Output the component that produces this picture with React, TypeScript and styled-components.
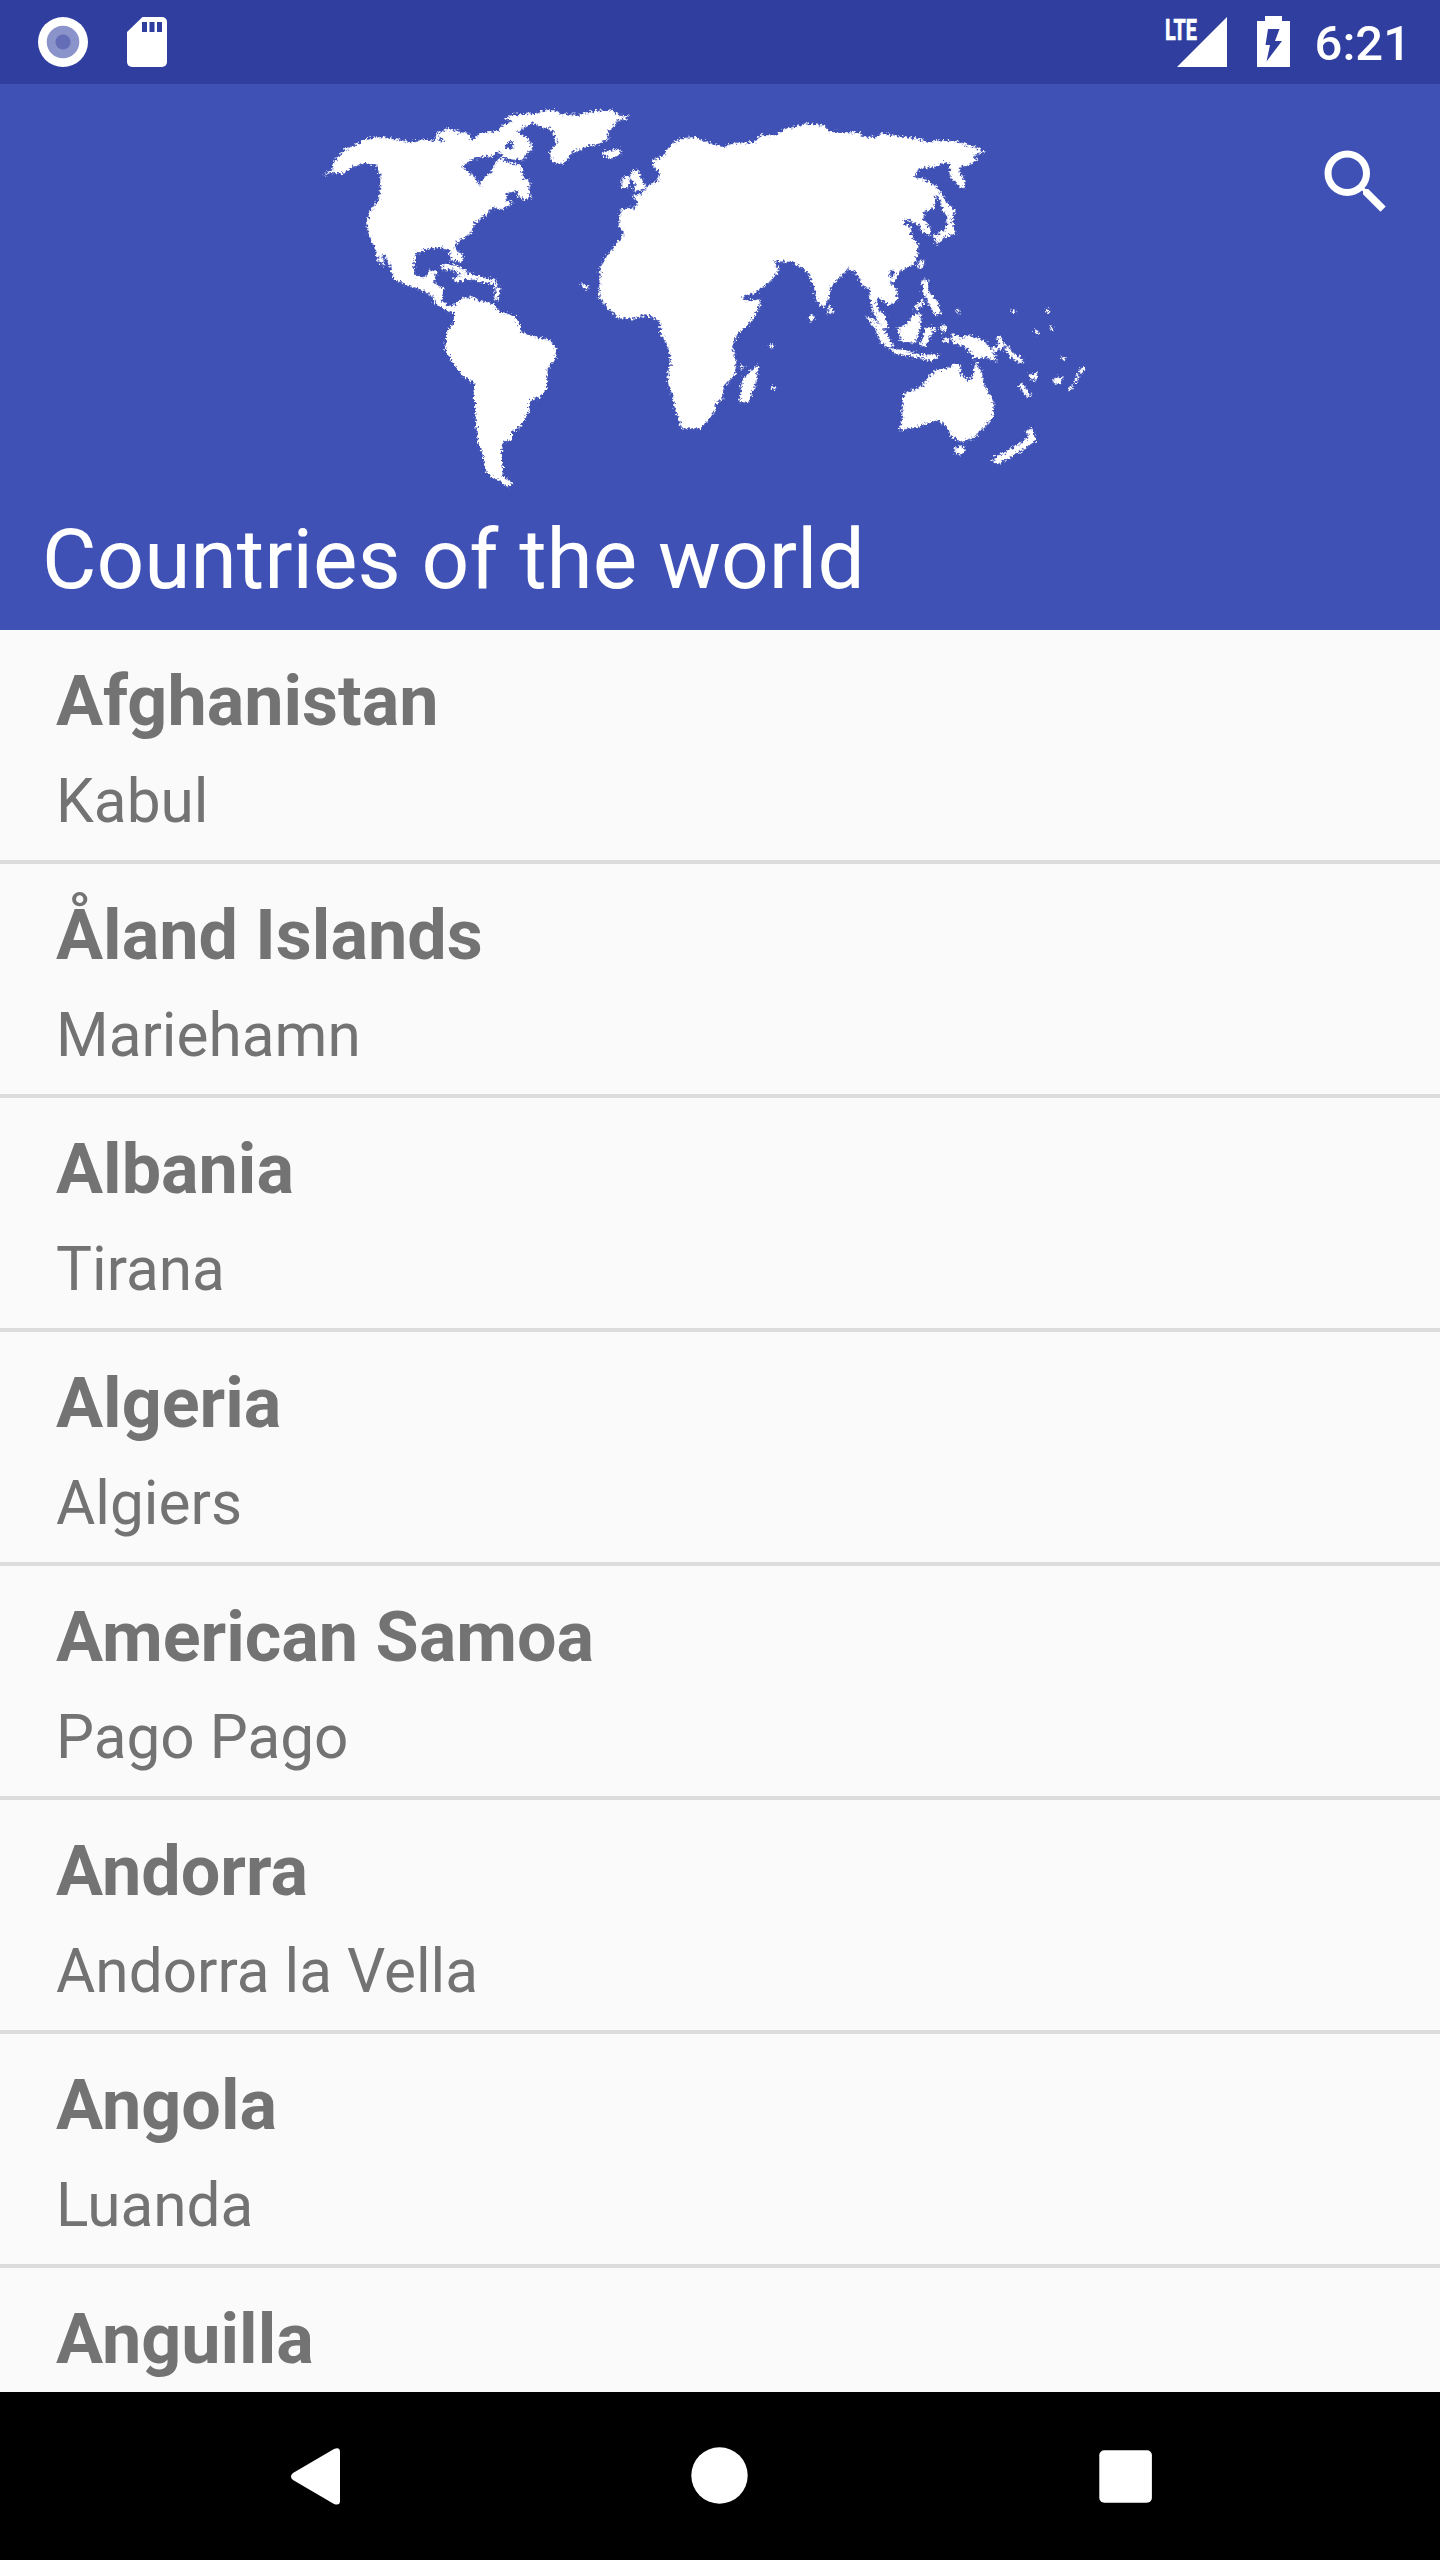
import React from "react";
import styled, { createGlobalStyle } from "styled-components";

const BLUE = "#3f51b5";
const DARK = "#303f9f";

const GlobalStyle = createGlobalStyle`
  body { margin: 0; background: #fafafa; }
  * { box-sizing: border-box; }
`;

const Screen = styled.div`
  display: flex;
  flex-direction: column;
  width: 1440px;
  height: 2560px;
  overflow: hidden;
  background: #fafafa;
  font-family: Roboto, "Noto Sans", sans-serif;
`;

const StatusBar = styled.header`
  display: flex;
  flex: none;
  align-items: center;
  justify-content: space-between;
  height: 84px;
  padding: 0 29px 0 38px;
  background: ${DARK};
  color: #fff;
`;

const StatusGroup = styled.div<{ $gap: number }>`
  display: flex;
  align-items: center;
  gap: ${(p) => p.$gap}px;
`;

const Icon = styled.svg`
  display: block;
  flex: none;
  overflow: visible;
`;

const Clock = styled.time`
  padding-top: 3px;
  margin-left: -5px;
  font-size: 49px;
  font-weight: 500;
  line-height: 57px;
`;

const AppBar = styled.section`
  display: flex;
  flex: none;
  flex-direction: column;
  height: 546px;
  background: ${BLUE};
  color: #fff;
`;

const Banner = styled.div`
  display: flex;
  align-items: flex-start;
  justify-content: space-between;
  height: 420px;
  padding: 6px 42px 0 300px;
`;

const SearchButton = styled.button`
  margin: 50px 0 0;
  padding: 0;
  border: 0;
  background: none;
  color: inherit;
`;

const Title = styled.h1`
  margin: 5px 0 0 42px;
  font-size: 83.8px;
  font-weight: 400;
  line-height: 100px;
`;

const List = styled.ul`
  flex: 1;
  min-height: 0;
  margin: 0;
  padding: 0;
  overflow: hidden;
  list-style: none;
`;

const Row = styled.li`
  height: 234px;
  padding: 30px 56px 0;
  border-bottom: 4px solid #dcdcdc;
  color: #737373;
`;

const Country = styled.div`
  font-size: 70.1px;
  font-weight: 700;
  line-height: 82px;
`;

const Capital = styled.div`
  margin-top: 25px;
  font-size: 60.3px;
  line-height: 70px;
`;

const NavBar = styled.nav`
  display: flex;
  flex: none;
  align-items: center;
  justify-content: space-between;
  height: 168px;
  padding: 0 274px;
  background: #000;
`;

const countries = [
  ["Afghanistan", "Kabul"],
  ["Åland Islands", "Mariehamn"],
  ["Albania", "Tirana"],
  ["Algeria", "Algiers"],
  ["American Samoa", "Pago Pago"],
  ["Andorra", "Andorra la Vella"],
  ["Angola", "Luanda"],
  ["Anguilla", ""],
];

const line = { fill: "none", stroke: "#fff", strokeLinecap: "round", strokeLinejoin: "round" } as const;

const WorldMap = () => (
  <Icon width="800" height="410" viewBox="300 90 800 410" fill="#fff" aria-label="World map">
    <defs>
      <filter id="coast" filterUnits="userSpaceOnUse" x="300" y="90" width="800" height="410" colorInterpolationFilters="sRGB">
        <feTurbulence type="fractalNoise" baseFrequency="0.42" numOctaves="2" seed="4" result="noise" />
        <feDisplacementMap in="SourceGraphic" in2="noise" scale="8" xChannelSelector="R" yChannelSelector="G" />
        <feGaussianBlur stdDeviation="0.6" />
      </filter>
    </defs>
    <g filter="url(#coast)" transform="translate(.3 .2)">
      <g transform="translate(300 90) scale(.33333)">
        <path d="M66 256 95 240 100 215 130 180 165 165 190 148 240 140 290 148 330 156 370 148 405 152 410 130 445 115 480 126 505 128 512 152 540 128 595 122 600 108 640 92 612 88 625 76 700 70 745 60 765 60 780 72 835 74 885 62 935 60 955 74 984 76 975 86 950 92 938 112 920 125 925 145 900 160 865 165 840 180 815 185 795 215 775 222 755 212 748 185 768 160 765 140 755 118 715 108 700 95 665 115 650 128 680 140 698 175 680 190 668 210 640 208 665 230 668 260 690 275 685 295 692 325 665 325 650 318 655 302 620 308 615 328 640 338 605 358 580 352 555 375 520 400 510 430 470 455 463 475 488 498 485 515 455 510 445 480 425 470 385 475 345 490 340 530 345 555 370 565 385 542 410 540 400 580 430 595 425 630 440 645 475 650 455 668 430 655 405 640 400 620 360 598 310 582 280 565 270 530 255 495 245 490 252 528 235 515 222 470 205 430 200 395 210 360 235 330 240 290 240 260 230 228 195 218 150 232 130 250 95 248Z" />
        <path fill={BLUE} d="M485 230 520 205 545 200 580 198 592 184 606 190 604 202 585 215 572 248 550 264 538 288 525 262ZM614 162 630 153 645 165 630 177 616 173ZM612 200 635 208 653 214 648 223 630 218 606 206ZM415 142 430 145 428 154 415 152Z" />
        <path {...line} strokeWidth="16" d="M430 532 458 530 492 548M468 566 510 558 548 568" />
        <path {...line} strokeWidth="12" d="M548 568 580 575 594 600 586 625" />
      </g>
      <path transform="translate(420 270) scale(.33333)" d="M50 95 80 113 100 105 125 85 155 78 175 92 215 98 240 125 280 135 295 155 302 185 345 200 385 208 408 235 405 265 382 295 380 350 365 378 330 390 322 430 300 470 275 485 275 510 250 515 242 540 248 600 245 618 278 640 260 650 240 632 215 620 195 600 185 545 172 515 165 430 162 340 125 315 100 280 75 240 78 185 100 155 102 120 80 120 55 108Z" />
      <g transform="translate(580 100) scale(.33333)">
        <path d="M218 180 245 170 270 135 300 115 345 110 380 125 425 140 465 128 525 125 540 105 580 105 620 85 680 70 730 75 750 95 835 97 850 110 890 110 905 98 950 108 1010 115 1040 125 1090 120 1135 125 1180 140 1218 155 1175 165 1192 178 1165 195 1135 200 1140 220 1155 240 1150 268 1125 245 1108 225 1108 190 1090 185 1065 200 1015 205 1003 230 1040 240 1070 260 1085 285 1105 312 1124 330 1115 360 1125 400 1092 412 1070 432 1060 408 1098 386 1102 350 1088 330 1080 300 1068 285 1060 325 1030 335 1030 358 1050 385 1050 404 1032 400 1015 375 975 355 970 370 995 385 990 400 1015 435 1005 490 955 515 945 542 925 545 950 570 952 600 925 615 890 590 885 610 870 590 868 565 845 555 830 520 805 505 775 535 750 560 745 595 730 622 710 605 700 560 685 520 640 485 580 483 598 510 575 540 530 575 485 590 490 602 540 598 535 625 515 660 470 705 455 740 468 785 465 820 430 860 425 900 405 910 400 940 360 985 305 985 285 930 275 880 260 840 272 775 260 730 240 700 240 665 200 642 160 655 115 655 80 620 55 590 60 500 85 460 132 400 115 375 122 325 165 322 175 305 155 288 185 280 205 255 235 240 238 215 220 200Z" />
        <path d="M155 212 172 208 188 245 200 264 160 274 165 250 150 235ZM125 235 150 225 145 260 122 265ZM68 150 90 152 118 145 120 162 90 175 72 168ZM532 795 530 840 505 908 478 905 482 860 490 830ZM685 645 700 643 700 660 688 664ZM568 732 578 732 578 744 570 744ZM572 858 590 858 585 867 572 866ZM2 548 24 558 20 570 8 565ZM745 615 762 635 750 642 742 635ZM475 794 495 798 485 806Z" />
        <path fill={BLUE} d="M928 512 942 512 942 532 930 530Z" />
      </g>
      <g transform="translate(840 250) scale(.33333)">
        <path d="M85 100 100 130 112 175 135 195 142 235 125 232 100 190 90 150ZM75 195 100 205 130 235 158 285 145 296 120 275 105 235ZM150 293 190 300 240 312 300 315 275 332 225 322 160 308ZM172 232 195 225 225 187 243 195 240 235 225 278 180 272ZM255 230 292 233 270 255 255 290 240 285ZM243 88 262 90 265 125 290 150 302 190 285 198 265 160 248 125ZM304 222 320 225 312 248 303 244ZM308 264 326 266 322 276 308 274ZM330 248 360 262 385 255 430 270 455 300 474 335 440 322 405 325 375 290 340 278ZM190 430 240 410 285 360 320 355 345 340 362 345 360 370 380 390 398 378 405 330 425 370 430 400 460 455 458 500 400 565 365 575 335 560 320 530 295 510 270 515 230 530 175 540 185 510ZM343 592 376 586 366 612 345 613ZM234 34 250 28 250 52 236 56ZM568 372 590 368 588 388 572 390ZM638 385 668 380 660 398 642 402Z" />
        <path {...line} strokeWidth="13" d="M230 172 246 155M462 298 488 285 476 265M500 296 520 318 542 332M543 406 552 420 564 434" />
        <path {...line} strokeWidth="21" d="M570 546 577 566 552 584M545 588 495 618 470 630" />
        <path {...line} strokeWidth="9" d="M351 178 356 186M518 180 522 184M620 178 626 184M632 230 634 236M586 242 590 246M668 322 672 326M728 355 722 366M712 374 706 394M694 410 688 416" />
      </g>
    </g>
  </Icon>
);

export default function App() {
  return (
    <>
      <GlobalStyle />
      <Screen>
        <StatusBar>
          <StatusGroup $gap={39}>
            <Icon width="50" height="50" viewBox="0 0 50 50">
              <circle cx="25" cy="25" r="25" fill="#fff" />
              <circle cx="25" cy="25" r="16.3" fill="#8a93ca" />
              <circle cx="25" cy="25" r="7.6" fill="#646eb7" />
            </Icon>
            <Icon width="40" height="50" viewBox="0 0 40 50">
              <path fill="#fff" d="M15.5 0H35a5 5 0 0 1 5 5v40a5 5 0 0 1-5 5H5a5 5 0 0 1-5-5V15z" />
              <path fill={DARK} d="M15 5h5v10h-5zM22.5 5h5v10h-5zM30 5h5v10h-5z" />
            </Icon>
          </StatusGroup>
          <StatusGroup $gap={30}>
            <Icon width="62" height="50" viewBox="0 0 62 50" fill="#fff">
              <path d="M62 0v50H12z" />
              <text x="0" y="22.5" fontSize="30" fontWeight="700" textLength="32" lengthAdjust="spacingAndGlyphs" stroke="#fff" strokeWidth="0.7">LTE</text>
            </Icon>
            <Icon width="33" height="52" viewBox="0 0 33 52">
              <path fill="#fff" d="M8 0h17v5h8v46H0V5h8z" />
              <path fill={DARK} d="M11 13h11.5L18 25h7L9.500 45.500 13 29H8.500z" />
            </Icon>
            <Clock>6:21</Clock>
          </StatusGroup>
        </StatusBar>
        <AppBar>
          <Banner>
            <WorldMap />
            <SearchButton aria-label="Search">
              <Icon width="84" height="84" viewBox="0 0 24 24" fill="currentColor">
                <path d="M15.500 14h-.79l-.28-.27A6.471 6.471 0 0 0 16 9.500 6.500 6.500 0 1 0 9.500 16c1.610 0 3.090-.59 4.230-1.570l.27.28v.79l5 4.990L20.490 19l-4.990-5zm-6 0C7.010 14 5 11.990 5 9.500S7.010 5 9.500 5 14 7.010 14 9.500 11.990 14 9.500 14z" />
              </Icon>
            </SearchButton>
          </Banner>
          <Title>Countries of the world</Title>
        </AppBar>
        <List>
          {countries.map(([name, capital]) => (
            <Row key={name}>
              <Country>{name}</Country>
              {capital && <Capital>{capital}</Capital>}
            </Row>
          ))}
        </List>
        <NavBar>
          <Icon width="84" height="84" viewBox="0 0 84 84" fill="#fff">
            <path d="M17 42.500Q17 40.500 19 39L60 15Q66 12.500 66 18V67Q66 72 60 70L19 46Q17 44.500 17 42.500Z" />
          </Icon>
          <Icon width="84" height="84" viewBox="0 0 84 84" fill="#fff">
            <circle cx="41.5" cy="41.5" r="28.2" />
          </Icon>
          <Icon width="84" height="84" viewBox="0 0 84 84" fill="#fff">
            <rect x="17.3" y="16.2" width="52.6" height="52.5" rx="5" />
          </Icon>
        </NavBar>
      </Screen>
    </>
  );
}
